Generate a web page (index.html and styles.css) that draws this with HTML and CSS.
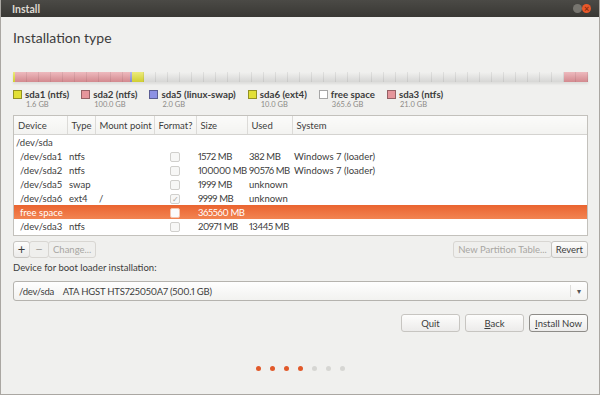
FILE: index.html
```html
<!DOCTYPE html>
<html lang="en">
<head>
    <meta charset="UTF-8">
    <title>Install</title>
    <link rel="stylesheet" href="styles.css">
</head>
<body>
<div class="window">
    <div class="titlebar">
        <span class="title">Install</span>
        <div class="controls">
            <span class="ctl min"></span>
            <span class="ctl close">&times;</span>
        </div>
    </div>

    <div class="content">
        <h1>Installation type</h1>

        <div class="diskbar">
            <div class="seg yellow" style="flex-grow:1.6"></div>
            <div class="seg pink" style="flex-grow:100"></div>
            <div class="seg blue" style="flex-grow:2"></div>
            <div class="seg yellow" style="flex-grow:10"></div>
            <div class="seg free" style="flex-grow:365.6"></div>
            <div class="seg pink" style="flex-grow:21"></div>
        </div>

        <ul class="legend">
            <li><span class="swatch yellow"></span><div><div class="name">sda1 (ntfs)</div><div class="size">1.6 GB</div></div></li>
            <li><span class="swatch pink"></span><div><div class="name">sda2 (ntfs)</div><div class="size">100.0 GB</div></div></li>
            <li><span class="swatch blue"></span><div><div class="name">sda5 (linux-swap)</div><div class="size">2.0 GB</div></div></li>
            <li><span class="swatch yellow"></span><div><div class="name">sda6 (ext4)</div><div class="size">10.0 GB</div></div></li>
            <li><span class="swatch free"></span><div><div class="name">free space</div><div class="size">365.6 GB</div></div></li>
            <li><span class="swatch pink"></span><div><div class="name">sda3 (ntfs)</div><div class="size">21.0 GB</div></div></li>
        </ul>

        <div class="table-box">
            <table class="partitions">
                <colgroup>
                    <col class="c-dev"><col class="c-type"><col class="c-mount"><col class="c-fmt"><col class="c-size"><col class="c-used"><col>
                </colgroup>
                <thead>
                    <tr>
                        <th>Device</th><th>Type</th><th>Mount point</th><th>Format?</th><th>Size</th><th>Used</th><th>System</th>
                    </tr>
                </thead>
                <tbody>
                    <tr><td>/dev/sda</td><td></td><td></td><td></td><td></td><td></td><td></td></tr>
                    <tr><td class="indent">/dev/sda1</td><td>ntfs</td><td></td><td class="fmt"><span class="check"></span></td><td class="num">1572 MB</td><td class="num">382 MB</td><td>Windows 7 (loader)</td></tr>
                    <tr><td class="indent">/dev/sda2</td><td>ntfs</td><td></td><td class="fmt"><span class="check"></span></td><td class="num">100000 MB</td><td class="num">90576 MB</td><td>Windows 7 (loader)</td></tr>
                    <tr><td class="indent">/dev/sda5</td><td>swap</td><td></td><td class="fmt"><span class="check"></span></td><td class="num">1999 MB</td><td>unknown</td><td></td></tr>
                    <tr><td class="indent">/dev/sda6</td><td>ext4</td><td class="mount">/</td><td class="fmt"><span class="check checked">&#10003;</span></td><td class="num">9999 MB</td><td>unknown</td><td></td></tr>
                    <tr class="selected"><td class="indent">free space</td><td></td><td></td><td class="fmt"><span class="check"></span></td><td class="num">365560 MB</td><td></td><td></td></tr>
                    <tr><td class="indent">/dev/sda3</td><td>ntfs</td><td></td><td class="fmt"><span class="check"></span></td><td class="num">20971 MB</td><td class="num">13445 MB</td><td></td></tr>
                </tbody>
            </table>
        </div>

        <div class="table-actions">
            <div class="btn-group">
                <button class="btn small">+</button><button class="btn small" disabled>&minus;</button><button class="btn" disabled>Change...</button>
            </div>
            <div class="btn-group">
                <button class="btn" disabled>New Partition Table...</button><button class="btn">Revert</button>
            </div>
        </div>

        <label class="field-label">Device for boot loader installation:</label>
        <div class="combo">
            <span class="combo-text">/dev/sda&nbsp;&nbsp;&nbsp;&nbsp;ATA HGST HTS725050A7 (500.1 GB)</span>
            <span class="combo-arrow">&#9662;</span>
        </div>

        <div class="dialog-buttons">
            <button class="btn wide">Quit</button>
            <button class="btn wide"><u>B</u>ack</button>
            <button class="btn wide default"><u>I</u>nstall Now</button>
        </div>

        <div class="steps">
            <span class="dot done"></span><span class="dot done"></span><span class="dot done"></span><span class="dot done"></span><span class="dot"></span><span class="dot"></span><span class="dot"></span>
        </div>
    </div>
</div>
</body>
</html>
```

FILE: styles.css
```css
body {
    margin: 0;
    font-family: Lato, "Open Sans", sans-serif;
    color: #3c3c3c;
    background: #f0f0ee;
}
.window {
    box-sizing: border-box;
    width: 600px;
    height: 395px;
    border: 1px solid #aaa7a2;
    border-top: none;
    background: #f0f0ee;
    overflow: hidden;
}
.titlebar {
    height: 17px;
    margin: 0 -1px;
    background: linear-gradient(#4b4a46, #393834);
    display: flex;
    align-items: center;
    justify-content: space-between;
    padding: 0 9px 0 12px;
}
.title {
    color: #dfdbd2;
    font-size: 10.5px;
    font-weight: bold;
}
.controls {
    display: flex;
    gap: 0;
    align-items: center;
}
.ctl {
    width: 9px;
    height: 9px;
    border-radius: 50%;
    background: #77756f;
}
.close {
    background: #e9582a;
    color: #8a2a0c;
    font-size: 9px;
    line-height: 9px;
    text-align: center;
    font-weight: bold;
}
.content {
    padding: 0 11px 0 12px;
}
h1 {
    margin: 11px 0 0;
    font-size: 14px;
    line-height: 20px;
    font-weight: normal;
    color: #3c3c3c;
}

/* partition bar */
.diskbar {
    display: flex;
    height: 10px;
    margin-top: 24px;
    box-shadow: 0 2px 2px rgba(0,0,0,0.08);
}
.seg {
    flex-basis: 0;
    min-width: 1px;
    background-image: repeating-linear-gradient(90deg, transparent 0 11px, rgba(0,0,0,0.07) 11px 12px), linear-gradient(rgba(255,255,255,0.35), rgba(0,0,0,0.08));
}
.yellow { background-color: #e2e036; }
.pink { background-color: #e5959b; }
.blue { background-color: #8d91e4; }
.free { background-color: #e9e9e7; }

.legend {
    list-style: none;
    margin: 6px 0 0;
    padding: 0;
    display: flex;
    gap: 12px;
}
.legend li {
    display: flex;
    gap: 3px;
}
.swatch {
    width: 7px;
    height: 7px;
    margin-top: 2px;
    border: 1px solid rgba(0,0,0,0.35);
}
.swatch.free { background: #fff; }
.name {
    font-size: 9.7px;
    font-weight: bold;
    line-height: 12px;
    color: #3c3c3c;
}
.size {
    font-size: 7.5px;
    line-height: 10px;
    color: #8c8a86;
    padding-left: 1px;
}

/* partition table */
.table-box {
    margin-top: 5px;
    height: 121px;
    box-sizing: border-box;
    border: 1px solid #c3c1bc;
    background: #fff;
}
.partitions {
    width: 100%;
    border-collapse: collapse;
    table-layout: fixed;
    font-size: 9.5px;
}
.c-dev { width: 53px; }
.c-type { width: 28px; }
.c-mount { width: 59px; }
.c-fmt { width: 42px; }
.c-size { width: 51px; }
.c-used { width: 45px; }
th {
    height: 18px;
    padding: 0 4px;
    text-align: left;
    font-weight: normal;
    background: linear-gradient(#fbfbfa, #f3f3f1);
    border-right: 1px solid #dcdbd8;
    border-bottom: 1px solid #d4d3d0;
    white-space: nowrap;
    overflow: hidden;
}
th:last-child { border-right: none; }
td {
    height: 14px;
    padding: 0 2px;
    white-space: nowrap;
    overflow: visible;
}
td.indent { padding-left: 6px; }
td.mount { padding-left: 4px; }
td.num {
    letter-spacing: -0.4px;
    font-variant-numeric: proportional-nums;
}
td.fmt { text-align: center; padding: 0; }
.check {
    display: inline-block;
    vertical-align: middle;
    width: 8px;
    height: 8px;
    border: 1px solid #d0cfcc;
    border-radius: 2px;
    background: #f7f7f6;
    font-size: 8px;
    line-height: 8px;
    color: #a8a7a4;
    text-align: center;
}
.selected td {
    background: linear-gradient(#ea6430, #f28452);
    color: #fff;
}
.selected .check {
    background: #fbfbfb;
    border-color: #f5c4ad;
}

/* buttons */
.btn {
    font-family: inherit;
    font-size: 9.5px;
    color: #3c3c3c;
    height: 17px;
    padding: 0 4px;
    border: 1px solid #c7c5c1;
    border-radius: 3px;
    background: linear-gradient(#fdfdfc, #ecebea);
    margin: 0;
    white-space: nowrap;
}
.btn:disabled {
    color: #a8a6a2;
    background: #efefed;
    border-color: #d8d6d2;
}
.btn-group {
    display: flex;
}
.btn-group .btn + .btn { margin-left: -1px; }
.btn.small {
    width: 17px;
    font-size: 13px;
    line-height: 13px;
    padding: 0;
}
.btn.small:disabled { width: 20px; }
.table-actions {
    display: flex;
    justify-content: space-between;
    margin-top: 5px;
}
.field-label {
    display: block;
    margin-top: 3px;
    font-size: 9.5px;
    line-height: 13px;
}
.combo {
    margin-top: 7px;
    height: 20px;
    box-sizing: border-box;
    border: 1px solid #b5b3ae;
    border-radius: 3px;
    background: linear-gradient(#fefefe, #f2f2f0);
    display: flex;
    align-items: center;
    justify-content: space-between;
    font-size: 9.5px;
    padding-left: 5px;
}
.combo-text {
    letter-spacing: -0.2px;
    font-variant-numeric: proportional-nums;
}
.combo-arrow {
    font-size: 8px;
    color: #555;
    width: 16px;
    text-align: center;
    border-left: 1px solid #dddcd9;
    line-height: 12px;
}
.dialog-buttons {
    display: flex;
    justify-content: flex-end;
    gap: 5px;
    margin-top: 13px;
}
.btn.wide {
    width: 59px;
    height: 18px;
    font-size: 9.5px;
}
.btn.default {
    border-color: #8e8c88;
}
.steps {
    display: flex;
    justify-content: center;
    gap: 9px;
    margin-top: 34px;
    padding-right: 1px;
}
.dot {
    width: 5px;
    height: 5px;
    border-radius: 50%;
    background: #d6d6d3;
}
.dot.done {
    background: #e1592a;
}
```
